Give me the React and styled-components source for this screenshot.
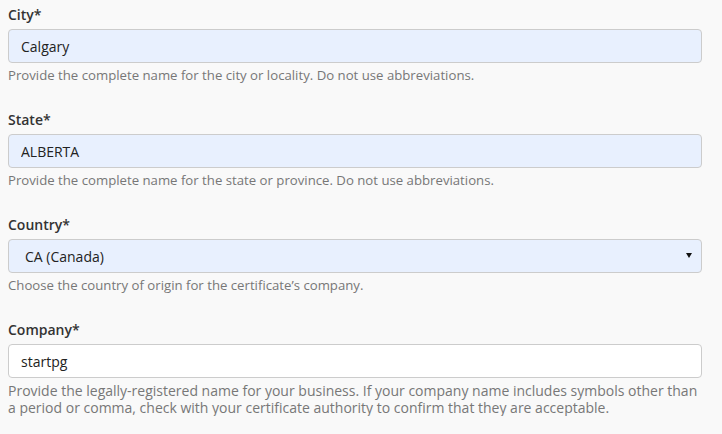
import React from "react";
import styled, { createGlobalStyle } from "styled-components";

const GlobalStyle = createGlobalStyle`
  html, body {
    margin: 0;
    padding: 0;
    background: #f9f9f9;
    font-family: "Open Sans", "Liberation Sans", sans-serif;
  }
`;

const Form = styled.form`
  display: flex;
  flex-direction: column;
  gap: 26px;
  padding: 5px 20px 0 8px;
`;

const Group = styled.div`
  display: flex;
  flex-direction: column;
`;

const Label = styled.label`
  font-size: 14px;
  line-height: 20px;
  font-weight: 600;
  color: #333;
  margin-bottom: 4px;
`;

const fieldCss = `
  box-sizing: border-box;
  width: 100%;
  height: 34px;
  border: 1px solid #ccc;
  border-radius: 4px;
  font-family: "Open Sans", "Liberation Sans", sans-serif;
  font-size: 14px;
  color: #222;
  outline: none;
  margin: 0;
`;

const Input = styled.input`
  ${fieldCss}
  padding: 0 12px;
  background: ${(p) => (p.$filled ? "#e8f0fe" : "#fff")};
`;

const SelectWrap = styled.div`
  position: relative;

  &::after {
    content: "";
    position: absolute;
    right: 10px;
    top: 14px;
    border-left: 3px solid transparent;
    border-right: 3px solid transparent;
    border-top: 5px solid #111;
    pointer-events: none;
  }
`;

const Select = styled.select`
  ${fieldCss}
  appearance: none;
  -webkit-appearance: none;
  padding: 0 12px 0 16px;
  background: #e8f0fe;
`;

const Help = styled.p`
  margin: 4px 0 0;
  font-size: ${(p) => (p.$large ? "14px" : "13.2px")};
  line-height: 17px;
  color: #777;
`;

export default function App() {
  return (
    <>
      <GlobalStyle />
      <Form>
        <Group>
          <Label>City*</Label>
          <Input $filled defaultValue="Calgary" />
          <Help>
            Provide the complete name for the city or locality. Do not use
            abbreviations.
          </Help>
        </Group>
        <Group>
          <Label>State*</Label>
          <Input $filled defaultValue="ALBERTA" />
          <Help>
            Provide the complete name for the state or province. Do not use
            abbreviations.
          </Help>
        </Group>
        <Group>
          <Label>Country*</Label>
          <SelectWrap>
            <Select defaultValue="CA">
              <option value="CA">CA (Canada)</option>
            </Select>
          </SelectWrap>
          <Help>Choose the country of origin for the certificate’s company.</Help>
        </Group>
        <Group>
          <Label>Company*</Label>
          <Input defaultValue="startpg" />
          <Help $large>
            Provide the legally-registered name for your business. If your
            company name includes symbols other than
            <br />a period or comma, check with your certificate authority to
            confirm that they are acceptable.
          </Help>
        </Group>
      </Form>
    </>
  );
}
